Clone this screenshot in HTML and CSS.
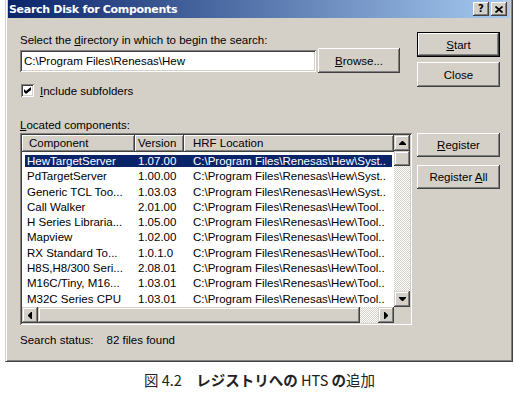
FILE: index.html
```html
<!DOCTYPE html>
<html lang="ja">
<head>
    <meta charset="UTF-8" />
    <meta name="viewport" content="width=device-width, initial-scale=1.0"/>
    <title>Search Disk for Components</title>
    <link rel="stylesheet" href="styles.css">
</head>
<body>

    <div class="window">
        <div class="titlebar">
            <span class="title">Search Disk for Components</span>
            <div class="title-buttons">
                <span class="title-btn help">?</span>
                <span class="title-btn">
                    <svg width="8" height="7" viewBox="0 0 8 7"><path d="M0.5 0.5L7.5 6.5M7.5 0.5L0.5 6.5" stroke="#000" stroke-width="1.7" fill="none"/></svg>
                </span>
            </div>
        </div>

        <div class="dialog">
            <div class="main">
                <div class="label">Select the <u>d</u>irectory in which to begin the search:</div>
                <div class="dir-row">
                    <div class="field">C:\Program Files\Renesas\Hew</div>
                    <div class="btn browse"><span><u>B</u>rowse...</span></div>
                </div>

                <div class="check-row">
                    <span class="checkbox">
                        <svg width="7" height="7" viewBox="0 0 7 7"><path d="M0 2L2 4L7 0V3L2 7L0 5Z" fill="#000"/></svg>
                    </span>
                    <span><u>I</u>nclude subfolders</span>
                </div>

                <div class="label located"><u>L</u>ocated components:</div>

                <div class="list">
                    <div class="list-view">
                        <div class="list-head">
                            <div class="head-cell col-name">Component</div>
                            <div class="head-cell col-ver">Version</div>
                            <div class="head-cell col-path">HRF Location</div>
                        </div>
                        <div class="list-rows">
                            <div class="list-row selected"><span class="col-name">HewTargetServer</span><span class="col-ver">1.07.00</span><span class="col-path">C:\Program Files\Renesas\Hew\Syst..</span></div>
                            <div class="list-row"><span class="col-name">PdTargetServer</span><span class="col-ver">1.00.00</span><span class="col-path">C:\Program Files\Renesas\Hew\Syst..</span></div>
                            <div class="list-row"><span class="col-name">Generic TCL Too...</span><span class="col-ver">1.03.03</span><span class="col-path">C:\Program Files\Renesas\Hew\Syst..</span></div>
                            <div class="list-row"><span class="col-name">Call Walker</span><span class="col-ver">2.01.00</span><span class="col-path">C:\Program Files\Renesas\Hew\Tool..</span></div>
                            <div class="list-row"><span class="col-name">H Series Libraria...</span><span class="col-ver">1.05.00</span><span class="col-path">C:\Program Files\Renesas\Hew\Tool..</span></div>
                            <div class="list-row"><span class="col-name">Mapview</span><span class="col-ver">1.02.00</span><span class="col-path">C:\Program Files\Renesas\Hew\Tool..</span></div>
                            <div class="list-row"><span class="col-name">RX Standard To...</span><span class="col-ver">1.0.1.0</span><span class="col-path">C:\Program Files\Renesas\Hew\Tool..</span></div>
                            <div class="list-row"><span class="col-name">H8S,H8/300 Seri...</span><span class="col-ver">2.08.01</span><span class="col-path">C:\Program Files\Renesas\Hew\Tool..</span></div>
                            <div class="list-row"><span class="col-name">M16C/Tiny, M16...</span><span class="col-ver">1.03.01</span><span class="col-path">C:\Program Files\Renesas\Hew\Tool..</span></div>
                            <div class="list-row"><span class="col-name">M32C Series CPU</span><span class="col-ver">1.03.01</span><span class="col-path">C:\Program Files\Renesas\Hew\Tool..</span></div>
                        </div>
                    </div>

                    <div class="vscroll">
                        <span class="scroll-btn"><svg width="7" height="4" viewBox="0 0 7 4"><path d="M3 0H4L7 3V4H0V3Z"/></svg></span>
                        <span class="thumb vthumb"></span>
                        <span class="track"></span>
                        <span class="scroll-btn"><svg width="7" height="4" viewBox="0 0 7 4"><path d="M0 0H7V1L4 4H3L0 1Z"/></svg></span>
                    </div>
                    <div class="hscroll">
                        <span class="scroll-btn"><svg width="4" height="7" viewBox="0 0 4 7"><path d="M0 3V4L3 7H4V0H3Z"/></svg></span>
                        <span class="thumb hthumb"></span>
                        <span class="track"></span>
                        <span class="scroll-btn"><svg width="4" height="7" viewBox="0 0 4 7"><path d="M0 0H1L4 3V4L1 7H0Z"/></svg></span>
                    </div>
                    <div class="corner"></div>
                </div>

                <div class="status">Search status:<span class="status-value">82 files found</span></div>
            </div>

            <div class="side">
                <div class="btn default"><span><u>S</u>tart</span></div>
                <div class="btn close"><span>Close</span></div>
                <div class="btn register"><span><u>R</u>egister</span></div>
                <div class="btn register-all"><span>Register <u>A</u>ll</span></div>
            </div>
        </div>
    </div>

    <p class="caption">図 4.2　<b>レジストリへの</b> HTS <b>の</b>追加</p>

</body>
</html>
```

FILE: styles.css
```css
* {
    box-sizing: border-box;
}

body {
    margin: 0;
    background-color: #fff;
    color: #000;
    font-family: "Liberation Sans", Arial, sans-serif;
    font-size: 11.5px;
}

u {
    text-underline-offset: 1px;
}

/* Win2000 pencere çerçevesi */
.window {
    width: 508px;
    margin-left: 5px;
    padding: 0 2px 2px 2px;
    background-color: #d4d0c8;
    border: 1px solid #404040;
    border-top: none;
    border-left-color: #d4d0c8;
    box-shadow: inset 1px 0 #fff, inset -1px -1px #808080;
}

.titlebar {
    display: flex;
    align-items: center;
    justify-content: space-between;
    height: 18px;
    padding: 0 3px 0 1px;
    background: linear-gradient(to right, #0a246a, #a6caf0);
}

.title {
    color: #fff;
    font-family: "DejaVu Sans", sans-serif;
    font-size: 11px;
    font-weight: bold;
    letter-spacing: -0.3px;
}

.title-buttons {
    display: flex;
    gap: 2px;
}

.title-btn {
    display: flex;
    align-items: center;
    justify-content: center;
    width: 16px;
    height: 14px;
    background-color: #d4d0c8;
    box-shadow: inset -1px -1px #404040, inset 1px 1px #fff, inset -2px -2px #808080;
}

.help {
    font-family: "DejaVu Sans", sans-serif;
    font-size: 10px;
    font-weight: bold;
    padding-bottom: 1px;
}

.dialog {
    display: grid;
    grid-template-columns: 392px 83px;
    column-gap: 5px;
    padding: 14px 0 12px 12px;
}

.label {
    margin-top: 1px;
    line-height: 14px;
    white-space: nowrap;
}

.dir-row {
    display: flex;
    align-items: center;
    gap: 2px;
    height: 25px;
    margin-top: 1px;
}

.field {
    width: 296px;
    height: 22px;
    padding-left: 4px;
    line-height: 22px;
    background-color: #fff;
    box-shadow: inset 1px 1px #808080, inset -1px -1px #fff, inset 2px 2px #404040, inset -2px -2px #d4d0c8;
}

/* Düğmeler */
.btn {
    display: flex;
    align-items: center;
    justify-content: center;
    height: 25px;
    background-color: #d4d0c8;
    box-shadow: inset -1px -1px #404040, inset 1px 1px #fff, inset -2px -2px #808080, inset 2px 2px #d4d0c8;
    white-space: nowrap;
}

.browse {
    width: 82px;
    height: 25px;
}

.btn.default {
    border: 1px solid #000;
}

.side {
    display: flex;
    flex-direction: column;
}

.close {
    margin-top: 5px;
}

.register {
    height: 24px;
    margin-top: 46px;
}

.register-all {
    height: 24px;
    margin-top: 8px;
}

.check-row {
    display: flex;
    align-items: center;
    gap: 6px;
    height: 13px;
    margin-top: 11px;
    padding-left: 1px;
}

.checkbox {
    display: flex;
    align-items: center;
    justify-content: center;
    width: 13px;
    height: 13px;
    background-color: #fff;
    box-shadow: inset 1px 1px #808080, inset -1px -1px #fff, inset 2px 2px #404040, inset -2px -2px #d4d0c8;
}

.located {
    margin-top: 21px;
}

/* Liste görünümü */
.list {
    display: grid;
    grid-template-columns: 1fr 16px;
    grid-template-rows: 1fr 16px;
    height: 192px;
    margin-top: 1px;
    padding: 2px;
    background-color: #fff;
    box-shadow: inset 1px 1px #808080, inset -1px -1px #fff, inset 2px 2px #404040, inset -2px -2px #d4d0c8;
}

.list-view {
    overflow: hidden;
}

.list-head {
    display: grid;
    grid-template-columns: 113px 49px 1fr;
    height: 17px;
}

.head-cell {
    line-height: 17px;
    background-color: #d4d0c8;
    box-shadow: inset -1px -1px #404040, inset 1px 1px #fff, inset -2px -2px #808080;
    white-space: nowrap;
    overflow: hidden;
}

.head-cell.col-name {
    padding-left: 7px;
}

.list-row {
    display: grid;
    grid-template-columns: 110px 49px 1fr;
    height: 15.3px;
    margin: 0 2px 0 3px;
    padding-top: 3px;
    line-height: 12px;
    white-space: nowrap;
}

.list-row span {
    overflow: hidden;
}

.list-row .col-name {
    padding-left: 2px;
}

.col-ver {
    padding-left: 3px;
}

.col-path {
    padding-left: 9px;
}

.list-row.selected {
    background-color: #0a246a;
    background-clip: content-box;
    color: #fff;
}

/* Kaydırma çubukları */
.vscroll,
.hscroll {
    display: flex;
}

.vscroll {
    flex-direction: column;
}

.scroll-btn {
    display: flex;
    align-items: center;
    justify-content: center;
    flex: 0 0 16px;
    background-color: #d4d0c8;
    box-shadow: inset -1px -1px #404040, inset 1px 1px #d4d0c8, inset -2px -2px #808080, inset 2px 2px #fff;
}

.thumb {
    background-color: #d4d0c8;
    box-shadow: inset -1px -1px #404040, inset 1px 1px #d4d0c8, inset -2px -2px #808080, inset 2px 2px #fff;
}

.vthumb {
    flex: 0 0 15px;
}

.hthumb {
    flex: 0 0 322px;
}

.track {
    flex: 1;
    background: repeating-conic-gradient(#fff 0% 25%, #d4d0c8 0% 50%) 0 0 / 2px 2px;
}

.corner {
    background-color: #d4d0c8;
}

.status {
    margin-top: 8px;
    line-height: 14px;
    white-space: nowrap;
}

.status-value {
    margin-left: 13px;
}

.caption {
    margin: 8px 0 0;
    padding-left: 5px;
    text-align: center;
    font-family: "Noto Sans CJK JP", sans-serif;
    font-size: 14.5px;
    line-height: 20px;
    color: #222;
}

.caption b {
    font-weight: bold;
}
```
